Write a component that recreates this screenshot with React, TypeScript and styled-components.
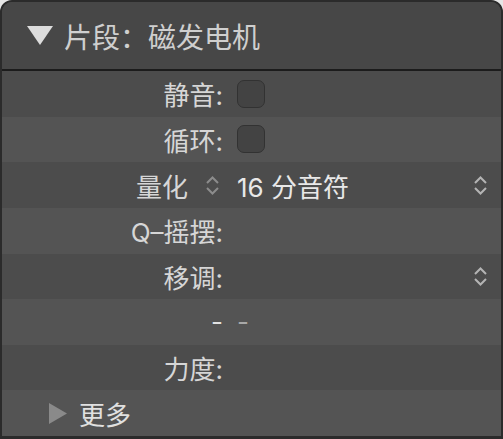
import styled, { createGlobalStyle } from "styled-components";

const GlobalStyle = createGlobalStyle`
  html, body {
    margin: 0;
    padding: 0;
    background: #e6e6e6;
  }
  * {
    box-sizing: border-box;
  }
`;

const Panel = styled.div`
  width: 503px;
  height: 439px;
  border: 2px solid #2b2b2b;
  border-bottom-width: 3px;
  border-radius: 12px 12px 0 0;
  overflow: hidden;
  display: flex;
  flex-direction: column;
  background: #4d4d4d;
  font-family: "Inter", "Noto Sans CJK SC", sans-serif;
`;

const Header = styled.div`
  height: 69px;
  flex: none;
  display: flex;
  align-items: center;
  gap: 11px;
  padding-left: 25px;
  background: #474747;
  border-bottom: 2px solid #1c1c1c;
  color: #cfcfcf;
  font-size: 28px;
`;

const Rows = styled.div`
  flex: 1;
  display: flex;
  flex-direction: column;
`;

const Row = styled.div<{ $shade: "dark" | "light" }>`
  flex: 1;
  display: grid;
  grid-template-columns: 221px 1fr auto;
  column-gap: 14px;
  align-items: center;
  padding-right: 13px;
  background: ${(p) => (p.$shade === "dark" ? "#4c4c4c" : "#545454")};
`;

const Label = styled.div<{ $dim?: boolean }>`
  display: flex;
  justify-content: flex-end;
  align-items: center;
  gap: 17px;
  font-size: 26px;
  color: ${(p) => (p.$dim ? "#e2e2e2" : "#d6d6d6")};
`;

const Value = styled.div<{ $dim?: boolean }>`
  font-size: 26px;
  color: ${(p) => (p.$dim ? "#a8a8a8" : "#e8e8e8")};
  display: flex;
  align-items: center;
`;

const Checkbox = styled.span`
  width: 28px;
  height: 28px;
  border-radius: 7px;
  background: #434343;
  border: 1px solid #323232;
  display: inline-block;
`;

const Stepper = styled.svg<{ $tone: string; $inset?: number }>`
  display: block;
  color: ${(p) => p.$tone};
  margin-right: ${(p) => p.$inset ?? 0}px;
`;

const MoreRow = styled.div`
  flex: 1;
  display: flex;
  align-items: center;
  gap: 12px;
  padding-left: 47px;
  background: #545454;
  color: #e0e0e0;
  font-size: 26px;
`;

const UpDown = ({ tone, inset }: { tone: string; inset?: number }) => (
  <Stepper $tone={tone} $inset={inset} width="15" height="21" viewBox="0 0 15 21">
    <path d="M2 8 L7.5 2.5 L13 8" fill="none" stroke="currentColor" strokeWidth="2" />
    <path d="M2 13 L7.5 18.5 L13 13" fill="none" stroke="currentColor" strokeWidth="2" />
  </Stepper>
);

const App: React.FC = () => {
  return (
    <>
      <GlobalStyle />
      <Panel>
        <Header>
          <svg width="26" height="19" viewBox="0 0 26 19">
            <polygon points="0,0 26,0 13,19" fill="#dcdcdc" />
          </svg>
          <span>片段：磁发电机</span>
        </Header>
        <Rows>
          <Row $shade="dark">
            <Label>静音:</Label>
            <Value>
              <Checkbox />
            </Value>
          </Row>
          <Row $shade="light">
            <Label>循环:</Label>
            <Value>
              <Checkbox />
            </Value>
          </Row>
          <Row $shade="dark">
            <Label>
              量化
              <UpDown tone="#8c8c8c" inset={3} />
            </Label>
            <Value>16 分音符</Value>
            <UpDown tone="#b4b4b4" />
          </Row>
          <Row $shade="light">
            <Label>Q–摇摆:</Label>
            <Value />
          </Row>
          <Row $shade="dark">
            <Label>移调:</Label>
            <Value />
            <UpDown tone="#b4b4b4" />
          </Row>
          <Row $shade="light">
            <Label $dim>-</Label>
            <Value $dim>-</Value>
          </Row>
          <Row $shade="dark">
            <Label>力度:</Label>
            <Value />
          </Row>
          <MoreRow>
            <svg width="18" height="21" viewBox="0 0 18 21">
              <polygon points="0,0 18,10.5 0,21" fill="#8a8a8a" />
            </svg>
            <span>更多</span>
          </MoreRow>
        </Rows>
      </Panel>
    </>
  );
};

export default App;
